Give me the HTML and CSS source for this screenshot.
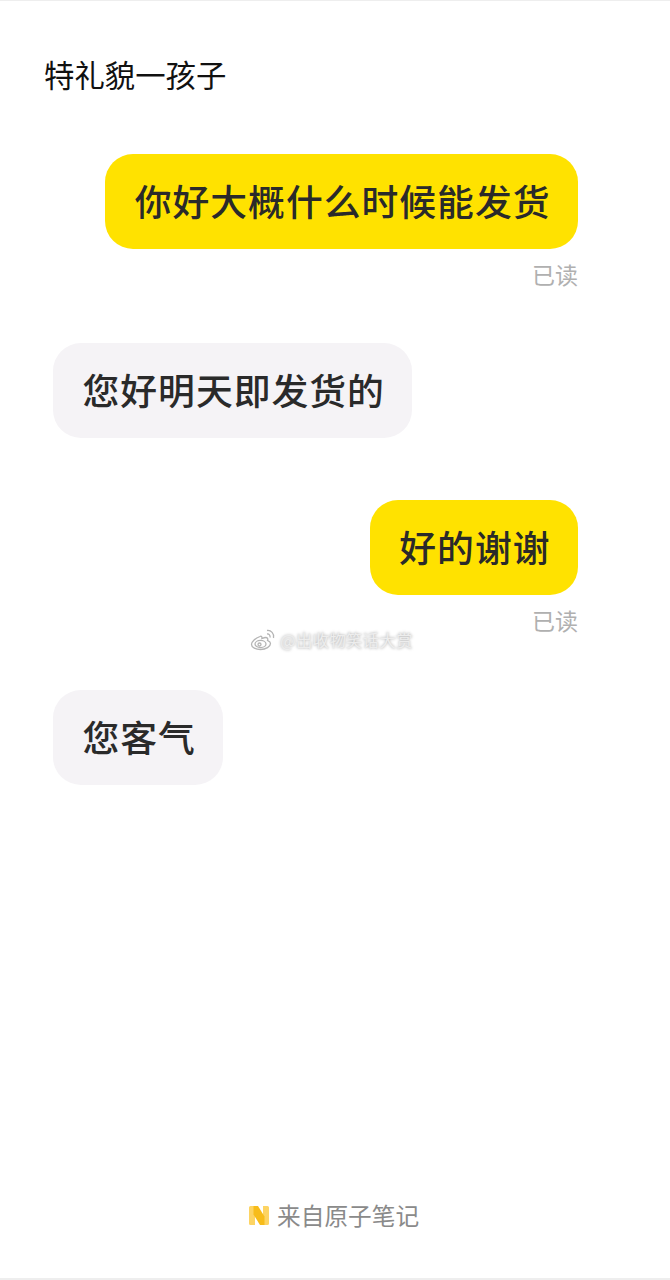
FILE: index.html
```html
<!DOCTYPE html>
<html lang="zh">
<head>
<meta charset="utf-8">
<title>特礼貌一孩子</title>
<link rel="stylesheet" href="styles.css">
</head>
<body>
<main class="page">
  <h1 class="title">特礼貌一孩子</h1>
  <section class="chat">
    <div class="row row-me row-first">
      <div class="bubble bubble-me">你好大概什么时候能发货</div>
      <div class="read">已读</div>
    </div>
    <div class="row row-them row-second">
      <div class="bubble bubble-them">您好明天即发货的</div>
    </div>
    <div class="row row-me row-third">
      <div class="bubble bubble-me">好的谢谢</div>
      <div class="read">已读</div>
    </div>
    <div class="row row-them row-fourth">
      <div class="bubble bubble-them">您客气</div>
    </div>
  </section>
  <div class="watermark">
    <svg class="weibo" width="26" height="22" viewBox="0 0 26 22" fill="none" stroke="#b4b4b4" stroke-width="1.3">
      <path d="M10 7.5C5.5 9 1.5 12.5 1.5 15.5c0 3 4.5 5 9 5 5.5 0 10-3 10-6 0-2-2-2.600-3-3 .6-1.400.4-3-2-3-1.600 0-3 .8-3.600 1 .3-1.500-.4-3-1.900-2z"/>
      <ellipse cx="10.500" cy="15" rx="5.500" ry="3.600"/>
      <circle cx="9.500" cy="15.500" r="1.500"/>
      <path d="M17 1.500c4-.6 7.500 3 6.500 7.500M17 5c2-.3 3.500 1.500 3 3.500"/>
    </svg>
    <span class="mark-text">@出收物笑话大赏</span>
  </div>
  <footer class="footer">
    <svg class="logo" width="20" height="21" viewBox="0 0 20 21">
      <path fill="#fdd463" d="M0 2.500Q0 1 1.500 1H6v19H1.500Q0 20 0 18.500zM14 1h4.500Q20 1 20 2.500v16q0 1.500-1.500 1.500H14z"/>
      <path fill="#f7bc1a" d="M4.500 1H9l6.500 10.500V20H11L4.500 9.500z"/>
    </svg>
    <span class="source">来自原子笔记</span>
  </footer>
</main>
</body>
</html>
```

FILE: styles.css
```css
* {
  box-sizing: border-box;
}

html,
body {
  margin: 0;
  padding: 0;
  background: #fff;
}

body {
  font-family: "Noto Sans CJK SC", "Noto Sans", sans-serif;
}

.page {
  position: relative;
  width: 670px;
  height: 1280px;
  padding-top: 1px;
  border-top: 1px solid #eeeeee;
  border-bottom: 2px solid #eeeeee;
  overflow: hidden;
}

.title {
  margin: 54px 0 0 44px;
  font-size: 30.400px;
  line-height: 36px;
  font-weight: 400;
  color: #111;
}

.chat {
  display: flex;
  flex-direction: column;
  padding: 0 92px 0 53px;
}

.row {
  display: flex;
  flex-direction: column;
}

.row-me {
  align-items: flex-end;
}

.row-them {
  align-items: flex-start;
}

.row-first {
  margin-top: 62px;
}

.row-second {
  margin-top: 52px;
}

.row-third {
  margin-top: 62px;
}

.row-fourth {
  margin-top: 53px;
}

.bubble {
  height: 95px;
  padding: 0 27.500px 3px 29.500px;
  border-radius: 28px;
  display: flex;
  align-items: center;
  font-size: 36.800px;
  letter-spacing: 1px;
  font-weight: 500;
  color: #2a2a2a;
  white-space: nowrap;
}

.bubble-me {
  background: #ffe200;
}

.bubble-them {
  background: #f5f3f6;
}

.read {
  margin-top: 8px;
  font-size: 23px;
  line-height: 34px;
  color: #b0b0b0;
}

.watermark {
  position: absolute;
  left: 250px;
  top: 627px;
  display: flex;
  align-items: center;
  gap: 4px;
}

.weibo {
  filter: blur(0.4px);
}

.mark-text {
  font-size: 16.700px;
  line-height: 24px;
  color: #ededed;
  text-shadow: 0 0 3px #a0a0a0;
}

.footer {
  position: absolute;
  left: 249px;
  top: 1197px;
  display: flex;
  align-items: center;
  gap: 8px;
}

.source {
  font-size: 23.700px;
  line-height: 34px;
  color: #8a8a8a;
}
```
